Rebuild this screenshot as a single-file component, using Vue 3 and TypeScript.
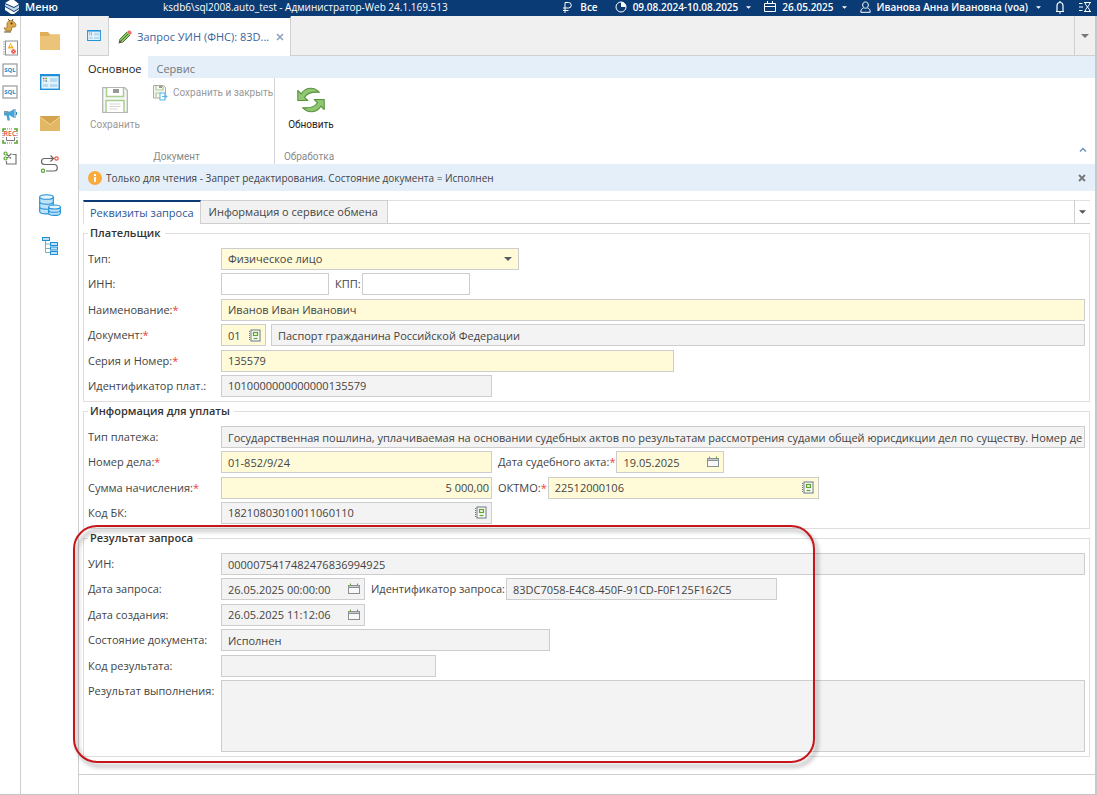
<script setup lang="ts">
import { reactive } from 'vue'

const form = reactive({
  type: 'Физическое лицо',
  inn: '',
  kpp: '',
  name: 'Иванов Иван Иванович',
  docCode: '01',
  docName: 'Паспорт гражданина Российской Федерации',
  series: '135579',
  payerId: '1010000000000000135579',
  payType:
    'Государственная пошлина, уплачиваемая на основании судебных актов по результатам рассмотрения судами общей юрисдикции дел по существу. Номер дела',
  caseNo: '01-852/9/24',
  actDate: '19.05.2025',
  amount: '5 000,00',
  oktmo: '22512000106',
  kbk: '18210803010011060110',
  uin: '0000075417482476836994925',
  reqDate: '26.05.2025 00:00:00',
  reqId: '83DC7058-E4C8-450F-91CD-F0F125F162C5',
  created: '26.05.2025 11:12:06',
  state: 'Исполнен',
  code: '',
  result: '',
})

const queries: string[] = ['Запрос 1', 'Запрос 2']
</script>

<template>
  <div class="app">
    <svg class="defs" width="0" height="0" aria-hidden="true">
      <symbol id="book" viewBox="0 0 12 13">
        <rect x="2" y="1" width="9" height="11" fill="#fff" stroke="#6b7680" />
        <path d="M.5 2v10" stroke="#6b7680" stroke-dasharray="1 1" />
        <rect x="4.500" y="3.500" width="4" height="3" fill="none" stroke="#63a62f" stroke-width="1.300" />
        <path d="M4.500 9.500h4" stroke="#63a62f" stroke-width="1.300" />
      </symbol>
      <symbol id="cal" viewBox="0 0 12 12">
        <rect x=".5" y="2.500" width="11" height="8" fill="#f8f8f8" stroke="#8a8f94" />
        <path d="M1 4.500h10" stroke="#8a8f94" />
        <path d="M1 3.500h10" stroke="#c9ccce" />
        <path d="M2.500 .5v2M9.500 .5v2" stroke="#63a62f" />
      </symbol>
      <symbol id="card" viewBox="0 0 20 16">
        <rect x=".7" y=".7" width="18.600" height="14.600" fill="#e4f3fd" stroke="#1e8fd8" stroke-width="1.400" />
        <path d="M1 1.500h18" stroke="#1e8fd8" stroke-width="1.500" />
        <path d="M10 4h7.500v4H10zM3 10h5v3H3zM10 10h7.500v3H10z" fill="#b9dbf2" />
        <path d="M3 4.500h1.500" stroke="#e44" stroke-width="1.500" />
        <path d="M5.500 4.500H7" stroke="#5a2" stroke-width="1.500" />
        <path d="M3 7h1.500" stroke="#fa3" stroke-width="1.500" />
        <path d="M5.500 7H7" stroke="#48c" stroke-width="1.500" />
      </symbol>
      <symbol id="floppy" viewBox="0 0 26 26">
        <path d="M.7 .7h22l2.600 2.600v22H.7z" fill="#f7f7f7" stroke="#b5b5b5" stroke-width="1.300" />
        <path d="M4.500 1v8.500h17V1" fill="#fff" stroke="#a9cf8f" stroke-width="1.500" />
        <rect x="11" y="2" width="6" height="4" fill="#999" />
        <path d="M4 25V13.500h18V25" fill="#fff" stroke="#a9cf8f" stroke-width="1.500" />
        <path d="M7.500 17h11M7.500 19.500h11M7.500 22h8" stroke="#d4d4d4" />
      </symbol>
      <symbol id="down" viewBox="0 0 8 4"><path d="M0 0h8L4 4z" fill="currentColor" /></symbol>
    </svg>

    <header class="topbar">
      <button class="menu" type="button">
        <svg width="16" height="14" viewBox="0 0 16 14">
          <path d="M1 3l5-3h4l5 4-5 3z" fill="#fff" />
          <path d="M1 4l9 4 5-3v3l-5 3-9-5z" fill="#c3d6ea" />
          <path d="M1 7l9 5 5-3v1l-5 4H7L1 10z" fill="#fff" />
        </svg>
        Меню
      </button>
      <div class="title">ksdb6\sql2008.auto_test - Администратор-Web 24.1.169.513</div>
      <nav class="tools">
        <button type="button" class="t-all">
          <svg width="10" height="12" viewBox="0 0 10 12" fill="none" stroke="#fff"><path d="M3 12V1.500h3.500a2.500 2.500 0 0 1 0 5.500H1M1 9.500h5.500" /></svg>
          Все
        </button>
        <button type="button" class="t-range">
          <svg width="12" height="12" viewBox="0 0 12 12"><circle cx="6" cy="6" r="5" fill="none" stroke="#fff" /><path d="M6 6V1a5 5 0 0 1 5 5z" fill="#fff" /></svg>
          <span>09.08.2024-10.08.2025</span>
          <svg class="dd" width="5" height="3"><use href="#down" /></svg>
        </button>
        <button type="button" class="t-date">
          <svg width="12" height="12" viewBox="0 0 12 12" fill="none" stroke="#fff"><path d="M.5 2.500h11v8H.5zM.5 5.500h11M3.500 0v3M8.500 0v3" /></svg>
          <span>26.05.2025</span>
          <svg class="dd" width="5" height="3"><use href="#down" /></svg>
        </button>
        <button type="button" class="t-user">
          <svg width="11" height="12" viewBox="0 0 11 12" fill="none" stroke="#fff"><path d="M5.500 1c2 0 2.800 1.300 2.800 3s-1 3.200-2.800 3.200S2.700 5.700 2.700 4 3.500 1 5.500 1zM3.500 7C1.500 7.500.8 9 .8 11.300h9.400C10.200 9 9.500 7.500 7.500 7" /></svg>
          <span>Иванова Анна Ивановна (voa)</span>
          <svg class="dd" width="5" height="3"><use href="#down" /></svg>
        </button>
        <button type="button" class="t-bell" aria-label="Уведомления">
          <svg width="10" height="13" viewBox="0 0 10 13" fill="none" stroke="#fff"><path d="M5 0v1.500M1 10.500h8M2 10V5c0-2 1-3.500 3-3.500S8 3 8 5v5M4 12h2" stroke-width="1.200" /></svg>
        </button>
        <button type="button" aria-label="Очередь заданий">
          <svg width="12" height="12" viewBox="0 0 12 12" fill="none" stroke="#fff"><path d="M0 2.500h3.500M0 6h4M0 9.500h3.500M5 1.500h7M5 10.500h7M6 1.500c0 3 5 6 5 9M11 1.500c0 3-5 6-5 9" /></svg>
        </button>
      </nav>
    </header>

    <div class="body">
      <aside class="strip">
        <button type="button" aria-label="Дракон">
          <svg width="14" height="16" viewBox="0 0 14 16">
            <path d="M4 6c0-3 3-4 5-3 2 .5 4 2.500 4 4.500 0 1.500-2 2-4 1.500-1 1 0 3-1 4H3L1 10c1-.5 2 .5 3 0z" fill="#dfaa4a" stroke="#9a702a" stroke-width=".8" />
            <path d="M7 3L5 1M9 3l1-2M1 14h7" stroke="#54401c" stroke-width=".9" /><circle cx="8.500" cy="5.500" r="1" fill="#333" />
          </svg>
        </button>
        <button type="button" aria-label="Журнал ошибок">
          <svg width="15" height="16" viewBox="0 0 15 16">
            <rect x="2.500" y="1" width="12" height="14" fill="#fff" stroke="#8d9297" /><path d="M1 1v14" stroke="#8d9297" stroke-dasharray="1.500 1" />
            <path d="M7.500 3l3.500 5.500H4.500z" fill="#f8b11c" /><path d="M7.700 5v2" stroke="#fff" />
            <circle cx="10.500" cy="11.500" r="2.300" fill="#f04a3c" /><path d="M9.700 10.700l1.600 1.600m0-1.600l-1.600 1.600" stroke="#fff" stroke-width=".8" />
          </svg>
        </button>
        <button v-for="q in queries" :key="q" type="button" :aria-label="q">
          <svg width="16" height="14" viewBox="0 0 16 14">
            <rect x="1" y="1" width="14" height="12" fill="#fff" stroke="#969ba0" stroke-width="1.200" />
            <text x="8" y="9" text-anchor="middle" font-size="6" font-weight="700" fill="#1689cc">SQL</text>
          </svg>
        </button>
        <button type="button" aria-label="Объявления">
          <svg width="14" height="13" viewBox="0 0 14 13"><path d="M1 3.500h6L11 1v9L7 7.500H6l1 5H4.500L3.500 7.500H1z" fill="#45a3d8" /><path d="M12 1v9M13.500 4v3" stroke="#2588c4" /><path d="M1 3h4v2H1z" fill="#8a979f" /></svg>
        </button>
        <button type="button" aria-label="Запись">
          <svg width="16" height="16" viewBox="0 0 16 16"><path d="M1 4V1h3M12 1h3v3M15 12v3h-3M4 15H1v-3" fill="none" stroke="#5ca52e" stroke-width="1.600" /><path d="M5 1h6M1 5v6M15 5v6M5 15h6" stroke="#777" stroke-dasharray="1 1" /><path d="M4.500 9v3.500h8V9" fill="none" stroke="#777" /><text x="8" y="8" text-anchor="middle" font-size="7" font-weight="600" fill="#e8473d">REC</text></svg>
        </button>
        <button type="button" aria-label="Вырезать">
          <svg width="14" height="14" viewBox="0 0 14 14" fill="none"><path d="M4 3.500L8 7.500M4 7l4.500-4.500M9.500 3.500H13V13H3.500v-3" stroke="#777" stroke-width="1.200" /><circle cx="2.500" cy="2.500" r="1.500" stroke="#5ca52e" stroke-width="1.200" /><circle cx="2.500" cy="7.500" r="1.500" stroke="#5ca52e" stroke-width="1.200" /></svg>
        </button>
      </aside>

      <aside class="side">
        <button type="button" aria-label="Папки">
          <svg width="20" height="18" viewBox="0 0 20 18"><path d="M0 0h8l2 2.500h10V18H0z" fill="#dfae57" /><path d="M0 4h9l2-1.500h9V18H0z" fill="#ecc479" /></svg>
        </button>
        <button type="button" aria-label="Карточки"><svg width="20" height="16"><use href="#card" /></svg></button>
        <button type="button" aria-label="Почта">
          <svg width="20" height="15" viewBox="0 0 20 15"><path d="M0 0h20v15H0z" fill="#e3b865" /><path d="M0 0h20L10 8z" fill="#d5a34e" /><path d="M0 1l10 7.500L20 1" fill="none" stroke="#f0d194" /></svg>
        </button>
        <button type="button" aria-label="Маршруты">
          <svg width="20" height="18" viewBox="0 0 20 18" fill="none"><path d="M13 3.500H4.500a3 3 0 0 0 0 6H14a3.200 3.200 0 0 1 0 6.500H6M10.500 .5l3 3-3 3" stroke="#666" stroke-width="1.200" /><circle cx="16.500" cy="3.500" r="1.700" stroke="#ee5648" stroke-width="1.200" /><circle cx="3" cy="15.800" r="1.600" stroke="#5ca52e" stroke-width="1.200" /></svg>
        </button>
        <button type="button" aria-label="Базы данных">
          <svg width="22" height="22" viewBox="0 0 22 22" fill="#bfe2f8" stroke="#1e8fd8" stroke-width="1.100"><path d="M.7 3v14.500c0 3.200 13.600 3.200 13.600 0V3" /><ellipse cx="7.500" cy="3" rx="6.800" ry="2.300" fill="#e7f5fd" /><path d="M.7 8c0 3 13.600 3 13.600 0M.7 13c0 3 13.600 3 13.600 0" fill="none" /><path d="M9.700 13v6.300c0 2.800 11.600 2.800 11.600 0V13" /><ellipse cx="15.500" cy="13" rx="5.800" ry="2" fill="#e7f5fd" /><path d="M9.700 16.200c0 2.800 11.600 2.800 11.600 0" fill="none" /></svg>
        </button>
        <button type="button" aria-label="Дерево">
          <svg width="16" height="18" viewBox="0 0 16 18" fill="#bfe2f8" stroke="#1e8fd8"><path d="M3.500 3v12.500H8M3.500 7H8M3.500 11.500H8" fill="none" stroke="#8aa" /><rect x=".5" y=".5" width="7" height="3" /><rect x="8.500" y="5.500" width="7" height="3" /><rect x="8.500" y="10" width="7" height="3" /><rect x="8.500" y="14.500" width="7" height="3" /></svg>
        </button>
      </aside>

      <main class="main">
        <div class="doctabs">
          <button type="button" class="home" aria-label="Рабочий стол"><svg width="14" height="11"><use href="#card" /></svg></button>
          <div class="doctab">
            <svg width="14" height="14" viewBox="0 0 14 14"><path d="M1.500 9.500L9 2l3 3-7.500 7.500z" fill="#8cc662" /><path d="M1.500 9.500L9 2M4.500 12.500L12 5M3 11l7.500-7.500" stroke="#4d7a33" /><path d="M9 2l1.500-1.500h1.500L13.500 2v1.500L12 5z" fill="#ee6e72" /><path d="M1.500 9.500l3 3L.5 13.500z" fill="#555" /></svg>
            <span>Запрос УИН (ФНС): 83D...</span>
            <button type="button" aria-label="Закрыть вкладку"><svg width="8" height="8" viewBox="0 0 8 8"><path d="M1 1l6 6M7 1L1 7" stroke="#8ba2c0" stroke-width="1.600" /></svg></button>
          </div>
          <button type="button" class="more" aria-label="Все вкладки"><svg width="8" height="4"><use href="#down" /></svg></button>
        </div>

        <div class="ribtabs">
          <button type="button" class="on">Основное</button>
          <button type="button">Сервис</button>
        </div>
        <div class="ribbon">
          <section class="group doc">
            <div class="cmds">
              <button type="button" class="big" disabled><svg width="26" height="26"><use href="#floppy" /></svg>Сохранить</button>
              <button type="button" class="small" disabled>
                <svg width="15" height="16" viewBox="0 0 15 16"><path d="M.5 .5h10l2 2V13H.5z" fill="#f7f7f7" stroke="#aaa" /><path d="M3 1v4h7V1M3 13V8h6" fill="none" stroke="#a9cf8f" stroke-width="1.200" /><path d="M6 1h3v2H6z" fill="#999" /><rect x="7" y="8" width="5" height="7" fill="#fff" stroke="#59b4e6" /><path d="M9 11.500h5M12 9.500l2 2-2 2" fill="none" stroke="#59b4e6" /></svg>
                Сохранить и закрыть
              </button>
            </div>
            <div class="cap">Документ</div>
          </section>
          <section class="group proc">
            <div class="cmds">
              <button type="button" class="big live">
                <svg width="28" height="26" viewBox="0 0 28 26" fill="#92c574" stroke="#55943a" stroke-width="1.100" stroke-linejoin="round"><path d="M.8 3.500v10h10L7.500 10.300C10 6.500 15 4.500 22.500 5.300 17 -.5 8.500 -.3 4.200 6.800z" /><path d="M27.200 22.500v-10h-10l3.300 3.200C18 19.500 13 21.500 5.500 20.700c5.500 5.800 14 5.600 18.300-1.500z" /></svg>
                Обновить
              </button>
            </div>
            <div class="cap">Обработка</div>
          </section>
          <button type="button" class="fold" aria-label="Свернуть ленту"><svg width="8" height="5" viewBox="0 0 8 5"><path d="M1 4.500l3-3 3 3" fill="none" stroke="#7193bd" stroke-width="1.500" /></svg></button>
        </div>

        <div class="notice">
          <svg width="14" height="14" viewBox="0 0 14 14"><circle cx="7" cy="7" r="7" fill="#fbab3c" /><path d="M7 3v2M7 6v5" stroke="#fff" stroke-width="2" /></svg>
          <span>Только для чтения - Запрет редактирования. Состояние документа = Исполнен</span>
          <button type="button" aria-label="Закрыть сообщение"><svg width="8" height="8" viewBox="0 0 8 8"><path d="M1 1l6 6M7 1L1 7" stroke="#777" stroke-width="1.800" /></svg></button>
        </div>

        <div class="pagetabs">
          <button type="button" class="on">Реквизиты запроса</button>
          <button type="button">Информация о сервисе обмена</button>
          <button type="button" class="more" aria-label="Список вкладок"><svg width="7" height="4"><use href="#down" /></svg></button>
        </div>

        <form class="form" @submit.prevent>
          <fieldset>
            <legend>Плательщик</legend>
            <div class="rows six">
              <div class="row">
                <label class="lead" for="type">Тип:</label>
                <div class="field req w298">
                  <select id="type" v-model="form.type"><option>Физическое лицо</option></select>
                  <svg class="arrow" width="8" height="4"><use href="#down" /></svg>
                </div>
              </div>
              <div class="row">
                <label class="lead" for="inn">ИНН:</label>
                <div class="field w108"><input id="inn" v-model="form.inn" /></div>
                <label class="next" for="kpp">КПП:</label>
                <div class="field w108"><input id="kpp" v-model="form.kpp" /></div>
              </div>
              <div class="row">
                <label class="lead" for="name">Наименование:<i>*</i></label>
                <div class="field req grow"><input id="name" v-model="form.name" /></div>
              </div>
              <div class="row">
                <label class="lead" for="doc">Документ:<i>*</i></label>
                <div class="field req w45"><input id="doc" v-model="form.docCode" /><button type="button" aria-label="Выбрать документ"><svg width="12" height="13"><use href="#book" /></svg></button></div>
                <div class="field ro grow second"><input v-model="form.docName" aria-label="Вид документа" readonly /></div>
              </div>
              <div class="row">
                <label class="lead" for="series">Серия и Номер:<i>*</i></label>
                <div class="field req w453"><input id="series" v-model="form.series" /></div>
              </div>
              <div class="row">
                <label class="lead" for="pid">Идентификатор плат.:</label>
                <div class="field ro w271"><input id="pid" v-model="form.payerId" readonly /></div>
              </div>
            </div>
          </fieldset>

          <fieldset>
            <legend>Информация для уплаты</legend>
            <div class="rows four">
              <div class="row">
                <label class="lead" for="ptype">Тип платежа:</label>
                <div class="field ro grow"><input id="ptype" v-model="form.payType" readonly /></div>
              </div>
              <div class="row">
                <label class="lead" for="case">Номер дела:<i>*</i></label>
                <div class="field req w271"><input id="case" v-model="form.caseNo" /></div>
                <label class="next" for="act">Дата судебного акта:<i>*</i></label>
                <div class="field req w108"><input id="act" v-model="form.actDate" /><button type="button" aria-label="Выбрать дату"><svg width="12" height="12"><use href="#cal" /></svg></button></div>
              </div>
              <div class="row">
                <label class="lead" for="sum">Сумма начисления:<i>*</i></label>
                <div class="field req w271"><input id="sum" v-model="form.amount" class="num" /></div>
                <label class="next" for="oktmo">ОКТМО:<i>*</i></label>
                <div class="field req w271"><input id="oktmo" v-model="form.oktmo" /><button type="button" aria-label="Выбрать ОКТМО"><svg width="12" height="13"><use href="#book" /></svg></button></div>
              </div>
              <div class="row">
                <label class="lead" for="kbk">Код БК:</label>
                <div class="field ro w271"><input id="kbk" v-model="form.kbk" readonly /><button type="button" aria-label="Выбрать код БК"><svg width="12" height="13"><use href="#book" /></svg></button></div>
              </div>
            </div>
          </fieldset>

          <fieldset>
            <legend>Результат запроса</legend>
            <div class="rows last">
              <div class="row">
                <label class="lead" for="uin">УИН:</label>
                <div class="field ro grow"><input id="uin" v-model="form.uin" readonly /></div>
              </div>
              <div class="row">
                <label class="lead" for="rdate">Дата запроса:</label>
                <div class="field ro w144"><input id="rdate" v-model="form.reqDate" readonly /><button type="button" aria-label="Выбрать дату запроса"><svg width="12" height="12"><use href="#cal" /></svg></button></div>
                <label class="next" for="rid">Идентификатор запроса:</label>
                <div class="field ro w271"><input id="rid" v-model="form.reqId" readonly /></div>
              </div>
              <div class="row">
                <label class="lead" for="cdate">Дата создания:</label>
                <div class="field ro w144"><input id="cdate" v-model="form.created" readonly /><button type="button" aria-label="Выбрать дату создания"><svg width="12" height="12"><use href="#cal" /></svg></button></div>
              </div>
              <div class="row">
                <label class="lead" for="state">Состояние документа:</label>
                <div class="field ro w329"><input id="state" v-model="form.state" readonly /></div>
              </div>
              <div class="row">
                <label class="lead" for="code">Код результата:</label>
                <div class="field ro w215"><input id="code" v-model="form.code" readonly /></div>
              </div>
              <div class="row tall">
                <label class="lead" for="res">Результат выполнения:</label>
                <div class="field ro grow"><textarea id="res" v-model="form.result" readonly></textarea></div>
              </div>
            </div>
            <div class="mark"></div>
          </fieldset>
        </form>
        <footer class="status"></footer>
      </main>
    </div>
  </div>
</template>

<style>
body {
  margin: 0;
  background: #fff;
}
</style>

<style scoped>
.app,
.app * {
  box-sizing: border-box;
}
.app {
  display: flex;
  flex-direction: column;
  min-height: 100vh;
  font: 11px/14px 'Open Sans', 'Noto Sans', sans-serif;
  color: #444;
  border-bottom: 1px solid #c4c4c4;
}
.defs {
  position: absolute;
}
svg {
  display: block;
  flex: none;
}
button,
input,
select,
textarea {
  font: inherit;
  color: inherit;
  margin: 0;
  padding: 0;
  border: 0;
  background: none;
  border-radius: 0;
  outline: 0;
}
button {
  display: flex;
  align-items: center;
  white-space: nowrap;
}
.topbar {
  display: flex;
  align-items: center;
  height: 16px;
  padding: 0 6px 2px 4px;
  background: #0b3b75;
  color: #fff;
  white-space: nowrap;
}
.menu {
  gap: 5px;
  width: 159px;
  font-weight: 600;
}
.title {
  flex: 1;
  font-size: 10px;
  font-weight: 500;
}
.tools {
  display: flex;
  align-items: center;
  font-size: 10px;
  font-weight: 600;
}
.tools button {
  gap: 6px;
}
.tools .t-all {
  gap: 8px;
  margin-right: 17px;
}
.t-range,
.t-date {
  margin-right: 13px;
}
.t-user,
.t-bell {
  margin-right: 14px;
}
.dd {
  margin-left: 2px;
}
.body {
  display: flex;
  flex: 1;
}
.strip {
  display: flex;
  flex-direction: column;
  align-items: center;
  gap: 6px;
  width: 21px;
  padding-top: 2px;
  border-right: 1px solid #cfcfcf;
}
.strip button {
  height: 16px;
}
.side {
  display: flex;
  flex-direction: column;
  align-items: center;
  gap: 17px;
  width: 58px;
  padding-top: 13px;
  border-right: 1px solid #cfcfcf;
}
.side button {
  height: 24px;
}
.main {
  display: flex;
  flex-direction: column;
  flex: 1;
  min-width: 0;
  border-right: 2px solid #c8c8c8;
}
.doctabs {
  display: flex;
  height: 40px;
  background: #f0f0f0;
  border-bottom: 1px solid #d0d0d0;
}
.home {
  justify-content: center;
  width: 30px;
  border-right: 1px solid #d0d0d0;
}
.doctab {
  display: flex;
  align-items: center;
  width: 182px;
  margin-bottom: -1px;
  padding: 0 6px 0 9px;
  background: #fff;
  border-top: 2px solid #0b3b75;
  border-right: 1px solid #d0d0d0;
  color: #3a649c;
}
.doctab span {
  flex: 1;
  margin-left: 5px;
  white-space: nowrap;
}
.more {
  justify-content: center;
  width: 21px;
  margin-left: auto;
  border-left: 1px solid #d0d0d0;
  color: #777;
}
.ribtabs {
  display: flex;
  height: 22px;
  background: #e4effa;
}
.ribtabs button {
  padding: 3px 7px 0 8px;
  color: #777;
}
.ribtabs .on {
  padding-left: 9px;
  background: #fff;
  color: #222;
}
.ribbon {
  display: flex;
  height: 86px;
  font: 10px/14px Roboto, sans-serif;
}
.group {
  display: flex;
  flex-direction: column;
  justify-content: space-between;
}
.doc {
  width: 196px;
  border-right: 1px solid #d4d4d4;
}
.proc {
  width: 68px;
}
.cmds {
  display: flex;
  align-items: flex-start;
}
.big {
  flex: none;
  flex-direction: column;
  width: 72px;
  padding-top: 9px;
  gap: 5px;
}
.big:disabled,
.small:disabled {
  color: #999;
}
.big.live {
  color: #222;
}
.small {
  gap: 5px;
  padding: 7px 0 0 2px;
}
.cap {
  text-align: center;
  color: #8a8a8a;
}
.fold {
  align-self: flex-end;
  margin: 0 8px 12px auto;
}
.notice {
  display: flex;
  align-items: center;
  height: 27px;
  padding: 0 9px;
  gap: 4px;
  background: #e4effa;
  font-size: 10px;
  font-weight: 500;
}
.notice button {
  margin-left: auto;
}
.pagetabs {
  display: flex;
  height: 24px;
  margin: 9px 5px 0 4px;
  border-top: 1px solid #e0e0e0;
  border-bottom: 1px solid #cfcfcf;
}
.pagetabs button {
  margin-top: -1px;
  padding: 0 9px 0 8px;
  background: #f2f2f2;
  border: 1px solid #cfcfcf;
  border-width: 1px 1px 0 0;
}
.pagetabs .on {
  margin-bottom: -1px;
  padding: 0 6px;
  background: #fff;
  border-top: 2px solid #0b3b75;
  border-left: 1px solid #e0e0e0;
  color: #2b5797;
}
.pagetabs .more {
  width: 16px;
  padding: 0;
  background: none;
  border-width: 0 0 0 1px;
  color: #555;
}
.form {
  display: flex;
  flex-direction: column;
  flex: 1;
  gap: 2px;
  padding: 2px 5px 16px 4px;
}
fieldset {
  position: relative;
  min-width: 0;
  margin: 0;
  padding: 8px 4px 4px;
  border: 1px solid #dedede;
}
legend {
  padding: 0 4px 0 2px;
  font-weight: 600;
  color: #333;
}
.rows {
  display: flex;
  flex-direction: column;
  justify-content: space-between;
}
.six {
  min-height: 149px;
}
.four {
  min-height: 98px;
}
.last {
  min-height: 199px;
}
.row {
  display: flex;
  align-items: center;
  white-space: nowrap;
}
.lead {
  flex: none;
  width: 133px;
}
.next {
  padding: 0 1px 0 6px;
}
label i {
  color: #f0413a;
  font-style: normal;
}
.field {
  display: flex;
  align-items: center;
  height: 22px;
  border: 1px solid #cdcdcd;
  background: #fff;
}
.field input,
.field select {
  flex: 1;
  min-width: 0;
  height: 20px;
  padding: 0 2px 0 6px;
}
.field select {
  appearance: none;
}
.field .num {
  text-align: right;
}
.field button,
.arrow {
  flex: none;
  margin-right: 4px;
}
.arrow {
  margin-right: 6px;
  color: #555d66;
  pointer-events: none;
}
.req {
  background: #fffbd9;
}
.ro {
  background: #f3f3f3;
}
.grow {
  flex: 1;
}
.second {
  margin-left: 5px;
}
.w45 {
  width: 45px;
}
.w108 {
  width: 108px;
}
.w144 {
  width: 144px;
}
.w215 {
  width: 215px;
}
.w271 {
  width: 271px;
}
.w298 {
  width: 298px;
}
.w329 {
  width: 329px;
}
.w453 {
  width: 453px;
}
.tall {
  align-items: flex-start;
}
.tall .lead {
  padding-top: 4px;
}
.tall .field {
  height: 72px;
}
textarea {
  width: 100%;
  height: 70px;
  resize: none;
}
.mark {
  position: absolute;
  left: -11px;
  top: -20px;
  bottom: -7px;
  width: 742px;
  border: 2px solid #c5161b;
  border-radius: 24px;
  filter: drop-shadow(3px 4px 2px rgba(0, 0, 0, 0.4));
  pointer-events: none;
}
.status {
  height: 20px;
  border-top: 1px solid #cfcfcf;
}
</style>
